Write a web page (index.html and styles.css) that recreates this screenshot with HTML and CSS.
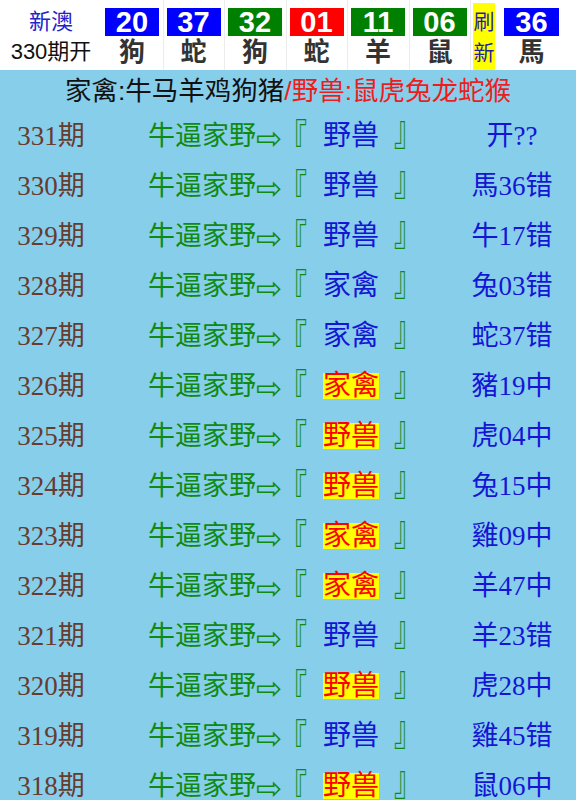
FILE: index.html
```html
<!DOCTYPE html>
<html lang="zh">

<head>
    <meta charset="UTF-8">
    <title>新澳 330期开</title>
    <link rel="stylesheet" href="styles.css">
</head>

<body class="page">
    <div class="head">
        <div class="lead">
            <div class="lead-name">新澳</div>
            <div class="lead-issue">330期开</div>
        </div>
        <div class="ball"><div class="num blue">20</div><div class="sx">狗</div></div>
        <div class="ball"><div class="num blue">37</div><div class="sx">蛇</div></div>
        <div class="ball"><div class="num green">32</div><div class="sx">狗</div></div>
        <div class="ball"><div class="num red">01</div><div class="sx">蛇</div></div>
        <div class="ball"><div class="num green">11</div><div class="sx">羊</div></div>
        <div class="ball"><div class="num green">06</div><div class="sx">鼠</div></div>
        <div class="refresh">刷<br>新</div>
        <div class="ball last"><div class="num blue">36</div><div class="sx">馬</div></div>
    </div>

    <div class="title">家禽:牛马羊鸡狗猪<span class="wild">/野兽:鼠虎兔龙蛇猴</span></div>

    <div class="list">
        <div class="row"><div class="qi">331期</div><div class="tip">牛逼家野<span class="arr">⇨</span><span class="bk-l">『</span><span class="tag">野兽</span><span class="bk-r">』</span></div><div class="res">开??</div></div>
        <div class="row"><div class="qi">330期</div><div class="tip">牛逼家野<span class="arr">⇨</span><span class="bk-l">『</span><span class="tag">野兽</span><span class="bk-r">』</span></div><div class="res">馬36错</div></div>
        <div class="row"><div class="qi">329期</div><div class="tip">牛逼家野<span class="arr">⇨</span><span class="bk-l">『</span><span class="tag">野兽</span><span class="bk-r">』</span></div><div class="res">牛17错</div></div>
        <div class="row"><div class="qi">328期</div><div class="tip">牛逼家野<span class="arr">⇨</span><span class="bk-l">『</span><span class="tag">家禽</span><span class="bk-r">』</span></div><div class="res">兔03错</div></div>
        <div class="row"><div class="qi">327期</div><div class="tip">牛逼家野<span class="arr">⇨</span><span class="bk-l">『</span><span class="tag">家禽</span><span class="bk-r">』</span></div><div class="res">蛇37错</div></div>
        <div class="row"><div class="qi">326期</div><div class="tip">牛逼家野<span class="arr">⇨</span><span class="bk-l">『</span><span class="tag hit">家禽</span><span class="bk-r">』</span></div><div class="res">豬19中</div></div>
        <div class="row"><div class="qi">325期</div><div class="tip">牛逼家野<span class="arr">⇨</span><span class="bk-l">『</span><span class="tag hit">野兽</span><span class="bk-r">』</span></div><div class="res">虎04中</div></div>
        <div class="row"><div class="qi">324期</div><div class="tip">牛逼家野<span class="arr">⇨</span><span class="bk-l">『</span><span class="tag hit">野兽</span><span class="bk-r">』</span></div><div class="res">兔15中</div></div>
        <div class="row"><div class="qi">323期</div><div class="tip">牛逼家野<span class="arr">⇨</span><span class="bk-l">『</span><span class="tag hit">家禽</span><span class="bk-r">』</span></div><div class="res">雞09中</div></div>
        <div class="row"><div class="qi">322期</div><div class="tip">牛逼家野<span class="arr">⇨</span><span class="bk-l">『</span><span class="tag hit">家禽</span><span class="bk-r">』</span></div><div class="res">羊47中</div></div>
        <div class="row"><div class="qi">321期</div><div class="tip">牛逼家野<span class="arr">⇨</span><span class="bk-l">『</span><span class="tag">野兽</span><span class="bk-r">』</span></div><div class="res">羊23错</div></div>
        <div class="row"><div class="qi">320期</div><div class="tip">牛逼家野<span class="arr">⇨</span><span class="bk-l">『</span><span class="tag hit">野兽</span><span class="bk-r">』</span></div><div class="res">虎28中</div></div>
        <div class="row"><div class="qi">319期</div><div class="tip">牛逼家野<span class="arr">⇨</span><span class="bk-l">『</span><span class="tag">野兽</span><span class="bk-r">』</span></div><div class="res">雞45错</div></div>
        <div class="row"><div class="qi">318期</div><div class="tip">牛逼家野<span class="arr">⇨</span><span class="bk-l">『</span><span class="tag hit">野兽</span><span class="bk-r">』</span></div><div class="res">鼠06中</div></div>
    </div>
</body>

</html>
```

FILE: styles.css
```css
* {
    margin: 0;
    padding: 0;
    box-sizing: border-box;
}

.page {
    background: #87ceeb;
    font-family: "Liberation Sans", "Noto Sans CJK SC", sans-serif;
    overflow: hidden;
}

.head {
    display: flex;
    height: 70px;
    background: #fff;
}

.lead {
    width: 102px;
    text-align: center;
    font-size: 22px;
    line-height: 28px;
    padding-top: 8px;
}

.lead-name {
    color: #2323c8;
}

.lead-issue {
    color: #111;
    margin-top: 2px;
}

.ball {
    width: 61.5px;
    padding: 8px 3.5px 0 3px;
    border-right: 1px solid #ececec;
    text-align: center;
}

.ball.last {
    border-right: none;
    margin-left: 6px;
}

.num {
    height: 28px;
    color: #fff;
    font-weight: bold;
    font-size: 29px;
    line-height: 29px;
}

.blue {
    background: #0000ff;
}

.green {
    background: #008000;
}

.red {
    background: #ff0000;
}

.sx {
    color: #333;
    font-weight: bold;
    font-size: 26px;
    line-height: 32px;
}

.refresh {
    width: 22px;
    margin: 3px 0 0 2px;
    background: #ffff00;
    color: #1f1fa8;
    font-size: 21px;
    line-height: 31px;
    text-align: center;
    padding-top: 3px;
}

.title {
    height: 41px;
    text-align: center;
    font-size: 26.5px;
    line-height: 42px;
    color: #111;
}

.wild {
    color: #ee1c1c;
}

.row {
    display: grid;
    grid-template-columns: 102px 346px 128px;
    height: 50px;
    align-items: center;
    font-family: "Liberation Serif", "Noto Sans CJK SC", serif;
    font-size: 27px;
    line-height: 30px;
}

.qi {
    text-align: center;
    color: #663b30;
}

.tip {
    padding-left: 46px;
    color: #108a10;
    white-space: nowrap;
    display: flex;
    align-items: center;
}

.arr {
    font-family: "DejaVu Sans", sans-serif;
    font-size: 31px;
    width: 24px;
    margin-top: 4px;
}

.bk-l,
.bk-r {
    display: inline-block;
    width: 27px;
    transform: scaleY(1.5);
}

.bk-l {
    margin-right: 16px;
    transform-origin: 50% 20%;
}

.bk-r {
    margin-left: 15px;
    transform-origin: 50% 80%;
}

.tag {
    color: #1515d5;
    font-size: 28px;
    line-height: 26px;
}

.tag.hit {
    color: #ff0000;
    background: #ffff00;
}

.res {
    text-align: center;
    color: #1515d5;
}
```
